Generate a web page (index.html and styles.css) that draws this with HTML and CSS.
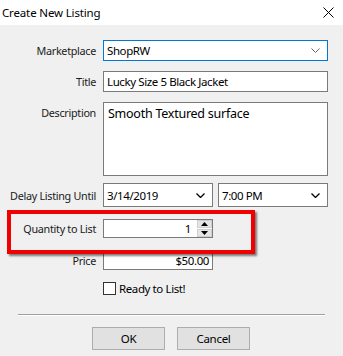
FILE: index.html
```html
<!DOCTYPE html>
<html lang="en">
<head>
    <meta charset="UTF-8">
    <meta name="viewport" content="width=device-width, initial-scale=1.0">
    <title>Create New Listing</title>
    <link rel="stylesheet" href="styles.css">
</head>
<body>
    <div class="titlebar">
        <span class="title-text">Create New Listing</span>
        <span class="close-btn">
            <svg width="11" height="11" viewBox="0 0 11 11"><path d="M0.5 0.5 L10.5 10.5 M10.5 0.5 L0.5 10.5" stroke="#000" stroke-width="1"/></svg>
        </span>
    </div>

    <div class="dialog">
        <div class="row row-market">
            <label class="label">Marketplace</label>
            <div class="field combo combo-focus wide">
                <span>ShopRW</span>
                <svg class="chev" width="9" height="5" viewBox="0 0 9 5"><path d="M0.5 0.5 L4.5 4.5 L8.5 0.5" fill="none" stroke="#666" stroke-width="1"/></svg>
            </div>
        </div>

        <div class="row row-title">
            <label class="label">Title</label>
            <div class="field text wide">Lucky Size 5 Black Jacket</div>
        </div>

        <div class="row row-desc">
            <label class="label label-top">Description</label>
            <div class="field area wide">Smooth Textured surface</div>
        </div>

        <div class="row row-delay">
            <label class="label">Delay Listing Until</label>
            <div class="field combo date">
                <span>3/14/2019</span>
                <svg class="chev" width="9" height="5" viewBox="0 0 9 5"><path d="M0.5 0.5 L4.5 4.5 L8.5 0.5" fill="none" stroke="#000" stroke-width="1.3"/></svg>
            </div>
            <div class="field combo time">
                <span>7:00 PM</span>
                <svg class="chev" width="9" height="5" viewBox="0 0 9 5"><path d="M0.5 0.5 L4.5 4.5 L8.5 0.5" fill="none" stroke="#000" stroke-width="1.3"/></svg>
            </div>
        </div>

        <div class="row row-qty highlight">
            <label class="label">Quantity to List</label>
            <div class="field spin">
                <span class="spin-value">1</span>
                <div class="spin-buttons">
                    <div class="spin-btn"><svg width="7" height="4" viewBox="0 0 7 4"><path d="M3.5 0 L7 4 L0 4 Z" fill="#000"/></svg></div>
                    <div class="spin-btn"><svg width="7" height="4" viewBox="0 0 7 4"><path d="M0 0 L7 0 L3.5 4 Z" fill="#000"/></svg></div>
                </div>
            </div>
        </div>

        <div class="row row-price">
            <label class="label">Price</label>
            <div class="field text num">$50.00</div>
        </div>

        <div class="row row-check">
            <span class="label"></span>
            <span class="checkbox"></span>
            <span class="check-text">Ready to List!</span>
        </div>

        <hr class="separator">

        <div class="buttons">
            <button class="btn">OK</button>
            <button class="btn">Cancel</button>
        </div>
    </div>
</body>
</html>
```

FILE: styles.css
```css
* {
    margin: 0;
    padding: 0;
    box-sizing: border-box;
}

body {
    font-family: "Noto Sans", sans-serif;
    font-size: 10.8px;
    letter-spacing: -0.3px;
    line-height: 15px;
    color: #000;
    background-color: #f0f0f0;
    width: 343px;
    height: 356px;
    overflow: hidden;
    white-space: nowrap;
}

.titlebar {
    height: 25px;
    background-color: #fff;
    display: flex;
    align-items: center;
    justify-content: space-between;
    padding: 0 9px 0 2px;
}

.title-text {
    font-size: 11.5px;
    letter-spacing: -0.15px;
}

.close-btn {
    display: flex;
}

.dialog {
    padding-top: 15px;
}

.row {
    display: flex;
    align-items: center;
    gap: 7px;
}

.label {
    width: 96px;
    flex: none;
    text-align: right;
    color: #1a1a1a;
}

.label-top {
    align-self: flex-start;
    padding-top: 3px;
}

.field {
    background-color: #fff;
    border: 1px solid #7a7a7a;
    font-size: 11.5px;
    letter-spacing: -0.4px;
    height: 21px;
    display: flex;
    align-items: center;
    padding: 0 3px;
}

.wide {
    width: 225px;
}

.combo {
    justify-content: space-between;
    padding-right: 7px;
}

.combo-focus {
    border-color: #0078d7;
}

.row-title {
    margin-top: 10px;
}

.row-desc {
    margin-top: 10px;
}

.area {
    height: 74px;
    align-items: flex-start;
    padding: 3px 4px;
    font-size: 12.5px;
    letter-spacing: -0.25px;
}

.row-delay {
    margin-top: 7px;
}

.date,
.time {
    height: 24px;
}

.date {
    width: 110px;
}

.time {
    width: 110px;
    margin-left: -2px;
}

.row-qty {
    margin-top: 12px;
    height: 19px;
    position: relative;
}

/* red annotation frame drawn over the dialog */
.highlight::before {
    content: "";
    position: absolute;
    left: 7px;
    top: -9px;
    width: 240px;
    height: 36px;
    border: 4px solid #f00000;
    box-shadow: 2px 2px 2px rgba(0, 0, 0, 0.5);
}

.spin {
    width: 110px;
    height: 19px;
    padding: 0 0 0 3px;
    justify-content: flex-end;
}

.spin-value {
    padding-right: 6px;
}

.spin-buttons {
    width: 15px;
    height: 17px;
    display: flex;
    flex-direction: column;
    gap: 1px;
}

.spin-btn {
    flex: 1;
    background-color: #e5e5e5;
    border: 1px solid #cfcfcf;
    display: flex;
    align-items: center;
    justify-content: center;
}

.row-price {
    margin-top: 12px;
    height: 20px;
}

.num {
    width: 110px;
    height: 20px;
    justify-content: flex-end;
}

.row-check {
    margin-top: 12px;
    height: 13px;
    gap: 0;
}

.row-check .label {
    margin-right: 7px;
}

.checkbox {
    width: 13px;
    height: 13px;
    background-color: #fff;
    border: 1px solid #333;
}

.check-text {
    font-size: 11.5px;
    letter-spacing: -0.4px;
    margin-left: 3px;
}

.separator {
    border: none;
    border-top: 1px solid #a0a0a0;
    border-bottom: 1px solid #fff;
    margin: 19px 18px 0 18px;
}

.buttons {
    display: flex;
    gap: 12px;
    padding-left: 92px;
    margin-top: 11px;
}

.btn {
    width: 73px;
    height: 23px;
    background-color: #e1e1e1;
    border: 1px solid #adadad;
    font-family: "Noto Sans", sans-serif;
    font-size: 11.5px;
    letter-spacing: -0.3px;
    color: #000;
}
```
